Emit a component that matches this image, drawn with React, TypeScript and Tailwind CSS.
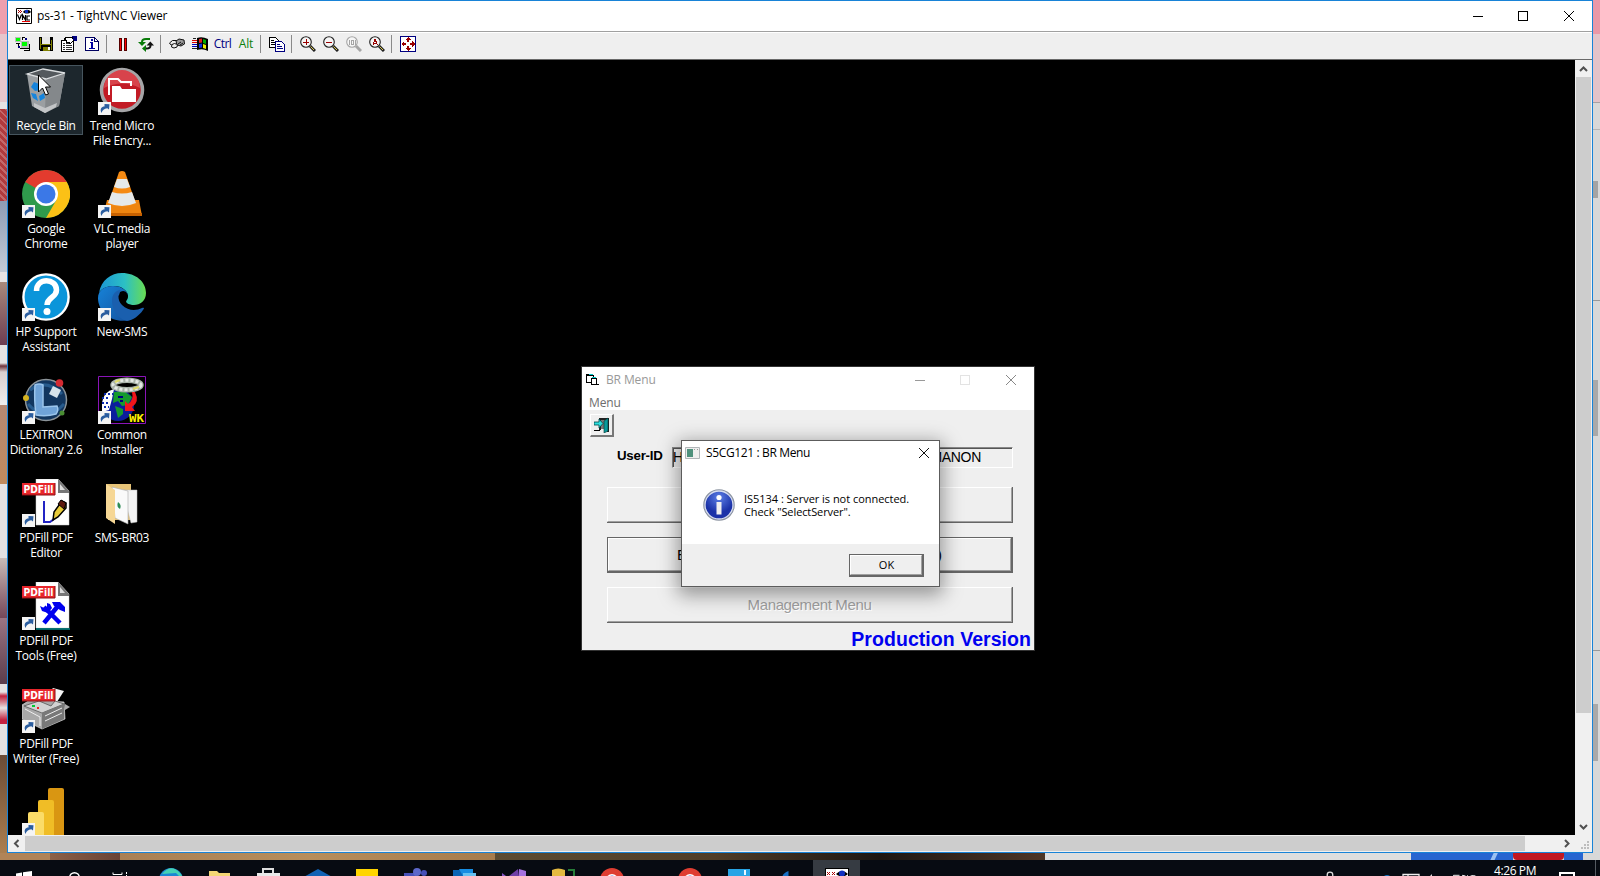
import React from "react";

type Kids = { children?: React.ReactNode };

const ui = "font-['Open_Sans','Noto_Sans',sans-serif]";

function Px({ children }: Kids) {
  return (
    <svg className="h-4 w-4" viewBox="0 0 16 16" shapeRendering="crispEdges" fill="none">
      {children}
    </svg>
  );
}

function VncLogo() {
  return (
    <svg className="h-4 w-4 shrink-0" viewBox="0 0 16 16" fill="none">
      <path d="M.5.5h15v15H.5z" fill="#fff" stroke="#000" />
      <path d="M2 2h1v1H2zm2 0h1v1H4zM3 3h1v1H3zM2 4h1v1H2zm2 0h1v1H4zM5 3h1v1H5z" fill="#a00" />
      <path d="M7 4c2-3 6-3 8 0-2 2-6 2-8 0z" fill="#000" />
      <path d="M9 2h3v3H9z" fill="#1030c0" />
      <path d="M1.5 6.500l2 5 2-5M6.500 12V7l3 5V7M14 8h-3v4h3" stroke="#000" strokeWidth="1.200" />
      <path d="M6 13h8v1H6z" fill="#e00" />
    </svg>
  );
}

function Magnifier({ mark, off }: { mark: React.ReactNode; off?: boolean }) {
  const c = off ? "#a5a5a5" : "#222";
  return (
    <svg className="h-4 w-4" viewBox="0 0 16 16" fill="none">
      <circle cx="6" cy="6" r="5.300" fill="#f6f6f6" stroke={c} strokeWidth="1.100" />
      <path d="M10 10l5 5" stroke={c} strokeWidth="3" />
      {!off && <path d="M10.500 10.500l3.500 3.500" stroke="#d8c850" strokeWidth="1" />}
      <g shapeRendering="crispEdges">{mark}</g>
    </svg>
  );
}

function Tool({ children }: Kids) {
  return <div className="flex h-[22px] w-[23px] items-center justify-center">{children}</div>;
}
function Sep() {
  return (
    <div className="w-2 pt-[2px] pl-[3px]">
      <div className="h-[18px] w-px bg-[#8a8a8a]" />
    </div>
  );
}

function Toolbar() {
  return (
    <div className="flex h-[26px] items-start bg-[#efefef] pl-[3px]">
      <Tool>
        <Px>
          <path d="M0 1h6v5H0z" fill="#bbb" /><path d="M1 2h4v3H1z" fill="#0f0" />
          <path d="M6 5h8v7H6z" fill="#bbb" /><path d="M7 6h5v4H7z" fill="#0f0" />
          <path d="M7.500 2v2M7 1.500h3M14.500 8v6M5 12.500h10M9 14.500h6M1 7.500h4M3.500 8v3" stroke="#000" />
          <path d="M10 2h2v2h-2zM3 10h2v2H3z" fill="#000080" />
        </Px>
      </Tool>
      <Tool>
        <Px>
          <path d="M1 1h14v14H2l-1-1z" fill="#000" /><path d="M2 2h1v11H2zM13 4h1v10h-1zM3 8h10v1H3z" fill="#808000" />
          <path d="M4 1h8v7H4z" fill="#e8e8e8" /><path d="M5 11h7v4H5z" fill="#808000" /><path d="M10 11h2v3h-2z" fill="#fff" />
        </Px>
      </Tool>
      <Tool>
        <Px>
          <path d="M.500 4.500h12v11H.500z" fill="#fff" stroke="#000" />
          <path d="M2 7.500h2M5 7.500h5M2 9.500h2M5 9.500h6M2 11.500h2M5 11.500h6M2 13.500h2M5 13.500h6" stroke="#333" />
          <path d="M3 3l3-2h5l2 3-4 4-1-2-2 1-1-3z" fill="#fff" stroke="#000" /><path d="M11 0h5v5h-3z" fill="#000080" />
        </Px>
      </Tool>
      <Tool>
        <Px>
          <path d="M1.500 1.500h9l4 4v9h-13z" fill="#fff" stroke="#000060" /><path d="M10.500 1v4.500H15" stroke="#000060" />
          <path d="M7 3h2v2H7zM6 6h3v6H7V7H6zM5 12h6v1H5z" fill="#0000a0" />
        </Px>
      </Tool>
      <Sep />
      <Tool>
        <Px><path d="M4.500 2.500h2v12h-2zM9.500 2.500h2v12h-2z" fill="#f00" stroke="#500" /></Px>
      </Tool>
      <Tool>
        <svg className="h-4 w-4" viewBox="0 0 16 16" fill="none">
          <path d="M4 7.500V6q0-3 4-3h4" stroke="#087a08" strokeWidth="2" /><path d="M0 6h8L4 10z" fill="#087a08" />
          <path d="M12.500 8v1.500q0 3-4 3H7" stroke="#111" strokeWidth="2" /><path d="M8.500 9.500h7.500l-3.700-4z" fill="#111" /><path d="M4 12.500l4-3.500v7z" fill="#087a08" />
        </svg>
      </Tool>
      <Sep />
      <Tool>
        <svg className="h-4 w-4" viewBox="0 0 16 16" fill="#eee" stroke="#111">
          <path d="M.500 7l3-2.500h4L9 6 7 9H2z" /><path d="M7 5l3-2 5 1 .5 4-3.500 2-4-1z" fill="#999" /><path d="M3 8.500l2.500-1 3 1L8 11l-3 1-2.500-1zM9 8l3-2M11 9l3-2" />
        </svg>
      </Tool>
      <Tool>
        <svg className="h-4 w-4" viewBox="0 0 16 16">
          <path d="M5 2q5-2 11 1v12q-5-3-11-1z" fill="#000" />
          <path d="M7 3l3-.5v4L7 7z" fill="#e02020" /><path d="M11 3l3 1v4l-3-1z" fill="#0a0" />
          <path d="M7 8l3-.5v4L7 12z" fill="#1030e0" /><path d="M11 8l3 1v4l-3-1z" fill="#ee0" />
          <path d="M0 4h5v1H0zm0 2h5v1H0z" fill="#d00" /><path d="M0 8h5v1H0zm0 2h5v1H0z" fill="#00b" /><path d="M0 12h5v1H0zM1 2h3v1H1z" fill="#222" />
        </svg>
      </Tool>
      <Tool><span className={`${ui} text-[12px] tracking-[-0.6px] text-[#000080]`}>Ctrl</span></Tool>
      <Tool><span className={`${ui} pl-px text-[12px] tracking-[-0.1px] text-[#0a800a]`}>Alt</span></Tool>
      <Sep />
      <Tool>
        <Px>
          <path d="M.500 1.500h6l3 3v7h-9z" fill="#fff" stroke="#000" /><path d="M2 4.500h3M2 6.500h5M2 8.500h5" stroke="#000" />
          <path d="M6.500 5.500h6l3 3v7h-9z" fill="#fff" stroke="#000080" /><path d="M8 8.500h3M8 10.500h5M8 12.500h6" stroke="#000080" />
        </Px>
      </Tool>
      <Sep />
      <Tool><Magnifier mark={<path d="M3 6.500h6M6.500 3v6" stroke="#900" />} /></Tool>
      <Tool><Magnifier mark={<path d="M3 6.500h6" stroke="#900" />} /></Tool>
      <Tool><Magnifier off mark={<path d="M3.500 4v5M5.500 4.500h2v4h-2zM9.500 4v5" stroke="#a5a5a5" />} /></Tool>
      <Tool><Magnifier mark={<path d="M4 9l2-6 2.500 6M4 7h4" stroke="#900" />} /></Tool>
      <Sep />
      <Tool>
        <Px>
          <path d="M.500.500h15v15H.500z" fill="#fff" stroke="#000080" />
          <path d="M8 1l3 3H5zM8 15l3-3H5zM1 8l3-3v6zM15 8l-3-3v6z" fill="#900" /><path d="M7 4h2v2H7zM7 10h2v2H7zM4 7h2v2H4zM10 7h2v2h-2z" fill="#900" />
        </Px>
      </Tool>
    </div>
  );
}

function Arrow() {
  return (
    <g>
      <path d="M0 35h13v13H0z" fill="#f4f4f4" />
      <path d="M3.500 46c-2-4 0-6.500 3-6.500V37l5 .3-.5 5.200-1.700-1.200C6 42 4.500 43 3.500 46z" fill="#2a5d9f" />
    </g>
  );
}

function Ico({ children, link = true }: Kids & { link?: boolean }) {
  return (
    <svg className="h-12 w-12" viewBox="0 0 48 48" fill="none">
      {children}
      {link && <Arrow />}
    </svg>
  );
}

function PdfBadge() {
  return (
    <g>
      <path d="M0 4h33v12H0z" fill="#e8262b" />
      <path d="M0 16h33V4" stroke="#8e1014" />
      <text x="1.500" y="14" fill="#fff" fontSize="10" fontWeight="700" fontFamily="DejaVu Sans" textLength="30" lengthAdjust="spacingAndGlyphs">PDFill</text>
    </g>
  );
}
function PdfPage() {
  return (
    <g>
      <path d="M14 0h22l11 12v34H14z" fill="#fff" stroke="#ccc" strokeWidth=".5" />
      <path d="M36 0l11 12v2H36z" fill="#777" />
      <path d="M38 5l5 6h-5z" fill="#ddd" />
    </g>
  );
}

const icons: Record<string, React.ReactNode> = {
  bin: (
    <Ico link={false}>
      <path d="M5 7l19 5 19-6-6 33-14 7-13-7z" fill="#9b9fa2" />
      <path d="M24 12l19-6-6 33-14 7z" fill="#84888b" />
      <path d="M5 7l16-5 22 4-19 6z" fill="#54595d" stroke="#dcdfe1" strokeWidth="1.300" />
      <path d="M9 20l3-5 5 2 2 6-6 1zM9 26l5 1 2 7-5-3zM17 29l5-3 1 5-5 3z" fill="#1684dc" />
      <path d="M12 36l11 5 12-5-1 4-11 6-11-6z" fill="#c3c5c7" />
      <path d="M16.500 8v17l4-4 3 7 3-1-3-7h5z" fill="#fff" stroke="#000" />
    </Ico>
  ),
  trend: (
    <Ico>
      <circle cx="24" cy="23" r="20.500" fill="#c21b25" stroke="#a5a5a7" strokeWidth="3.500" />
      <path d="M6 21a18 18 0 0136 0q-18-9-36 0z" fill="#d8434b" />
      <path d="M11 28V12h9l3 3h10v4" stroke="#fff" strokeWidth="2" />
      <path d="M14 19h8l2 3h14v13H14z" fill="#fff" />
    </Ico>
  ),
  chrome: (
    <Ico>
      <circle cx="24" cy="24" r="24" fill="#2f9a4c" />
      <path d="M24 24L3.200 12A24 24 0 0144.800 12z" fill="#e33b2e" />
      <path d="M24 12h20.800A24 24 0 0124 48l10.400-18z" fill="#fbc116" />
      <circle cx="24" cy="24" r="12" fill="#fff" />
      <circle cx="24" cy="24" r="9.500" fill="#3b78e7" />
    </Ico>
  ),
  vlc: (
    <Ico>
      <path d="M9 30h32l3 16H5z" fill="#ee8510" /><path d="M5 43h39v3H5z" fill="#c76100" />
      <path d="M21 2q3-2 6 0l11 32q-14 6-28 0z" fill="#f58a13" />
      <path d="M19 9h10l3 8q-8 3-16 0zM14 22q10 3 20 0l4 11q-14 6-28 0z" fill="#e5e9ea" />
    </Ico>
  ),
  hp: (
    <Ico>
      <circle cx="24" cy="24" r="22.600" fill="#0b95da" stroke="#fff" strokeWidth="2.400" />
      <path d="M14.500 18c0-14 20-13 20-1 0 8-9.500 7-9.500 15" stroke="#fff" strokeWidth="5.500" />
      <circle cx="25" cy="38.500" r="3.500" fill="#fff" />
    </Ico>
  ),
  edge: (
    <Ico>
      <defs>
        <linearGradient id="eg" x1="0" x2="1"><stop stopColor="#1b96d6" /><stop offset=".55" stopColor="#2cc0c4" /><stop offset="1" stopColor="#69dc52" /></linearGradient>
        <linearGradient id="eb" x1="0" x2="1" y2="1"><stop stopColor="#1683d8" /><stop offset="1" stopColor="#15529e" /></linearGradient>
      </defs>
      <path d="M1 20C3 7 13 0 24 0c14 0 24 9 24 20 0 8-6 12-12 12-5 0-8-1-8-3s2-2 2-6c0-5-6-10-14-10S3 16 1 20z" fill="url(#eg)" />
      <path d="M0 25C0 17 7 13 15 13c9 0 14 5 15 9-6-5-13 1-12 8 1 9 9 18 14 17-18 4-32-8-32-22z" fill="url(#eb)" />
      <path d="M14 28c0-7 4-11 9-11-3 3-4 10 1 15 6 6 14 6 20 3 3-1 2 1 1 2-4 6-10 10-16 11-9-2-15-11-15-20z" fill="#1a5fae" />
      <path d="M22 19q5-3 7.500 2 .5 4-1.500 7 0 3 6 4-8 1-11-4-3-5-1-9z" fill="#000" />
    </Ico>
  ),
  lex: (
    <Ico>
      <circle cx="24" cy="24" r="20.500" fill="#12365f" stroke="#8c9499" strokeWidth="1.500" />
      <path d="M8 14q16-12 32 4M6 28q18 20 36 0" stroke="#275b8d" strokeWidth="3" />
      <path d="M13 9q4-2 8 0l0 22 14-1q2 4-1 8-10 3-20 1-2-16-1-30z" fill="#6fa3d8" stroke="#9bc5ec" strokeWidth="1.500" />
      <path d="M31 10l8 4-4 8-8-4z" fill="#d7e3ea" /><circle cx="37.500" cy="7" r="3.800" fill="#d52a32" />
      <circle cx="4" cy="22" r="3" fill="#d5b321" /><circle cx="40" cy="37" r="2.500" fill="#4a8e33" />
    </Ico>
  ),
  common: (
    <Ico>
      <path d="M.500.500h47v47H.500z" fill="#000" stroke="#8a14b8" />
      <circle cx="20" cy="29" r="16" fill="#0b1e9c" />
      <path d="M4 27q2-12 12-14l-2 10-3 11-7 2z" fill="#fff" />
      <path d="M4 22h8m-8 5h8m-6-9h9m-9 13h5" stroke="#0b2bb0" strokeWidth="2" strokeDasharray="2 2" />
      <path d="M16 16l10-1 8 6-4 8-6 1-4-5-5 2zM17 30l8 3 0 5-5 4z" fill="#159a2d" />
      <path d="M20 20h5v2h-5zM22 24h3v2h-3z" fill="#000080" />
      <ellipse cx="29" cy="9" rx="14" ry="4.800" stroke="#a9b3a9" strokeWidth="5.500" />
      <ellipse cx="29" cy="9" rx="14" ry="4.800" stroke="#e4e8e4" strokeWidth="3" strokeDasharray="3 2" /><path d="M17 6l5-2m13 9l6-2" stroke="#dedb6a" strokeWidth="2" />
      <path d="M37 16q5 10-3 15l3 4H27V25l3 3q6-4 4-12z" fill="#f0151b" />
      <text x="31" y="46" fill="#ffef00" fontSize="10" fontWeight="700" fontFamily="DejaVu Sans Mono" textLength="15" lengthAdjust="spacingAndGlyphs">WK</text>
    </Ico>
  ),
  editor: (
    <Ico>
      <PdfPage />
      <path d="M22 22v21h6l4-3" stroke="#2324c4" strokeWidth="2" />
      <path d="M31 41l1-8 8-11 4 2v5l-8 9z" fill="#e8cb3a" stroke="#000" strokeWidth="1.500" /><path d="M36 25l3-4 5 3-2 6z" fill="#5d1a10" stroke="#000" />
      <PdfBadge />
    </Ico>
  ),
  tools: (
    <Ico>
      <PdfPage />
      <path d="M14 47h34" stroke="#088" strokeWidth="1.500" />
      <path d="M22 41l14-17M22 25l16 16" stroke="#0000ee" strokeWidth="4.500" />
      <path d="M30 20h8l5 5v5l-5-2-6-4zM18 24l2 5 6 2 4-5-2-4-3-1v4l-3 1z" fill="#0000ee" />
      <PdfBadge />
    </Ico>
  ),
  writer: (
    <Ico>
      <path d="M31 3l11 3-9 14-14-3z" fill="#f5f5f5" /><path d="M26 16l8 3" stroke="#1e2c8a" strokeWidth="2" />
      <path d="M0 20l8-5 34 2 1 17-23 10-20-10z" fill="#a9a9a9" stroke="#ddd" strokeWidth=".7" />
      <path d="M2 21l18 7 22-9-9-3-4 5-12-5z" fill="#d2d2d2" stroke="#555" strokeWidth=".8" />
      <path d="M20 28v16l22-10V19z" fill="#787878" /><path d="M3 24l15 8v9M23 31l17-8M23 36l17-8" stroke="#eee" />
      <path d="M43 19l5 3-5 3z" fill="#aaa" /><path d="M10 21h3" stroke="#0c3" strokeWidth="2" /><path d="M15 23h2" stroke="#e22" strokeWidth="2" />
      <PdfBadge />
    </Ico>
  ),
  powerbi: (
    <Ico>
      <path d="M26 2q0-2 2-2h12q2 0 2 2v46H26z" fill="#d99612" />
      <path d="M16 14q0-2 2-2h12q2 0 2 2v34H16z" fill="#f0bd26" />
      <path d="M6 26q0-2 2-2h12q2 0 2 2v22H6z" fill="#fbdc68" />
    </Ico>
  ),
  folder: (
    <Ico link={false}>
      <path d="M8 5h25v36H10z" fill="#e7c478" /><path d="M24 11h15v32l-6 1z" fill="#f4f4f4" stroke="#bbb" strokeWidth=".5" />
      <path d="M14 8l16 4v33l-13-6z" fill="#fafafa" stroke="#aaa" strokeWidth=".6" /><path d="M8 5l9 6v34l-9-6z" fill="#f6d795" />
      <path d="M20 23q4 3 2 7-4-2-2-7z" fill="#2e8c55" />
    </Ico>
  ),
};

const columns: [string, string[]][][] = [
  [
    ["bin", ["Recycle Bin"]], ["chrome", ["Google", "Chrome"]], ["hp", ["HP Support", "Assistant"]],
    ["lex", ["LEXiTRON", "Dictionary 2.6"]], ["editor", ["PDFill PDF", "Editor"]], ["tools", ["PDFill PDF", "Tools (Free)"]],
    ["writer", ["PDFill PDF", "Writer (Free)"]], ["powerbi", []],
  ],
  [
    ["trend", ["Trend Micro", "File Encry..."]], ["vlc", ["VLC media", "player"]], ["edge", ["New-SMS"]],
    ["common", ["Common", "Installer"]], ["folder", ["SMS-BR03"]],
  ],
];

function DesktopIcons() {
  return (
    <div className="flex gap-[2px] pl-[1px] pt-[5px]">
      {columns.map((col, i) => (
        <div key={i} className="flex w-[74px] flex-col">
          {col.map(([id, lines]) => (
            <div key={id} className="h-[103px]">
              <div className={id === "bin" ? "flex h-[70px] flex-col items-center bg-[#1d272d] pt-[1px] outline -outline-offset-1 outline-[#46555e]" : "flex flex-col items-center pt-[2px]"}>
                <div className={id === "bin" ? "pt-[1px]" : ""}>{icons[id]}</div>
                <div className={`${ui} pt-[3px] text-center text-[12px] leading-[15px] tracking-[-0.3px] whitespace-nowrap text-white`}>
                  {lines.map((l) => <div key={l}>{l}</div>)}
                </div>
              </div>
            </div>
          ))}
        </div>
      ))}
    </div>
  );
}

function Caption({ kind, color }: { kind: "min" | "max" | "close"; color: string }) {
  const d = { min: "M0 5.500h10", max: "M.500.500h9v9h-9z", close: "M0 0l10 10M10 0L0 10" }[kind];
  return (
    <svg className={kind === "close" ? "ml-px h-[10px] w-[10px]" : "h-[10px] w-[10px]"} viewBox="0 0 10 10" fill="none" stroke={color} shapeRendering={kind === "close" ? "auto" : "crispEdges"} overflow="visible">
      <path d={d} />
    </svg>
  );
}

function MenuButton({ children, strong, off }: Kids & { strong?: boolean; off?: boolean }) {
  return (
    <div className={strong ? "h-9 border border-r-2 border-b-2 border-[#666]" : "h-9 border-r border-b border-[#666]"}>
      <div className={`flex h-full items-center justify-center border border-t-white border-l-white border-r-[#a0a0a0] border-b-[#a0a0a0] pt-[2px] font-['Liberation_Sans',sans-serif] text-[15px] ${off ? "tracking-[-0.35px] text-[#a0a0a0] [text-shadow:1px_1px_0_#fff]" : "text-black"}`}>
        {children}
      </div>
    </div>
  );
}

function BrMenu() {
  return (
    <div className="absolute top-[306px] left-[573px] flex h-[285px] w-[454px] flex-col border border-[#333] bg-[#efefef] *:shrink-0">
      <div className="flex h-[25px] items-center bg-white pl-1">
        <svg className="h-[13px] w-[14px]" viewBox="0 0 14 13" fill="#fff" stroke="#000" shapeRendering="crispEdges">
          <path d="M.500 2.500h7v7h-7z" /><path d="M0 1.500h4" /><path d="M5.500 5.500h5v6h-5z" /><path d="M3 1.500h4M6 4.500h4" stroke="#0cc" /><path d="M11 11.500h2" />
        </svg>
        <div className={`${ui} flex-1 pl-[6px] text-[12px] tracking-[-0.13px] text-[#999]`}>BR Menu</div>
        <div className="flex gap-[35px] pr-[18px]">
          <Caption kind="min" color="#999" />
          <Caption kind="max" color="#e3e3e3" />
          <Caption kind="close" color="#888" />
        </div>
      </div>
      <div className={`${ui} flex h-[18px] items-center bg-white pt-[2px] pl-[7px] text-[12px] leading-[15px] tracking-[-0.1px] text-[#6d6d6d]`}>Menu</div>
      <div className="px-2 pt-1">
        <div className="flex h-[23px] w-6 items-center justify-center border-t border-r-2 border-b-2 border-l border-t-white border-r-[#777] border-b-[#777] border-l-white">
          <svg className="h-4 w-4" viewBox="0 0 16 16">
            <path d="M5 1h10v14h-2V3H7v10H5z" fill="#222" /><path d="M7 3h6v9H7z" fill="#777" /><path d="M10 4l4-3v13l-4 2z" fill="#0a9a9a" stroke="#033" strokeWidth=".6" />
            <path d="M0 5h5V2l4 4.500L5 11V8H0z" fill="#2ee0e0" stroke="#044" strokeWidth=".8" /><path d="M0 13h6v1H0z" fill="#000" />
          </svg>
        </div>
      </div>
      <div className="mt-[10px] flex pr-[21px] pl-[35px] font-['Liberation_Sans',sans-serif]">
        <div className="w-[55px] text-[13.300px] leading-[18px] font-bold tracking-[-0.25px] text-black">User-ID</div>
        <div className="flex h-[21px] flex-1 items-center justify-between border border-t-[#888] border-r-white border-b-white border-l-[#888] pr-[31px] text-[14px] text-black shadow-[inset_1px_1px_0_#555]">
          <span>H</span><span className="tracking-[-0.3px]">MANON</span>
        </div>
      </div>
      <div className="flex flex-col gap-[14px] pt-[19px] pr-[21px] pl-[25px]">
        <MenuButton />
        <MenuButton strong>
          <span className="flex w-[265px] justify-between"><span>E</span><span>)</span></span>
        </MenuButton>
        <MenuButton off>Management Menu</MenuButton>
      </div>
      <div className="pt-[5px] pr-[3px] text-right font-['Liberation_Sans',sans-serif] text-[19.500px] leading-[22px] font-bold tracking-[0.05px] text-[#0000f0]">Production Version</div>
    </div>
  );
}

function MessageBox() {
  return (
    <div className="absolute top-[380px] left-[673px] flex h-[147px] w-[259px] flex-col border border-[#5c5c5c] bg-[#efefef] shadow-[0_5px_18px_3px_rgba(0,0,0,0.38)]">
      <div className="flex h-[24px] items-center bg-white pl-[3px]">
        <svg className="h-[14px] w-[15px]" viewBox="0 0 15 14">
          <path d="M.500 1.500h14v11H.500z" fill="#eee" stroke="#b0b5b8" /><path d="M2 3h6v8H2z" fill="#4e917c" /><path d="M9 3h1v1H9zm3 0h1v1h-1z" fill="#999" />
        </svg>
        <div className={`${ui} flex-1 pl-[6px] text-[12px] tracking-[-0.36px] text-black`}>S5CG121 : BR Menu</div>
        <div className="pr-[10px]"><Caption kind="close" color="#111" /></div>
      </div>
      <div className="flex h-[79px] bg-white pt-[22px] pl-[21px]">
        <svg className="mt-[1px] h-[33px] w-[33px] shrink-0" viewBox="0 0 33 33">
          <defs><radialGradient id="ig" cy=".25"><stop stopColor="#5d80e6" /><stop offset="1" stopColor="#1b32a8" /></radialGradient></defs>
          <circle cx="16" cy="17" r="15" fill="url(#ig)" stroke="#8b93a0" strokeWidth="1.500" /><circle cx="16" cy="17" r="14" fill="none" stroke="#d9dff0" strokeWidth="1.300" />
          <circle cx="16" cy="9.500" r="2.600" fill="#fff" /><path d="M13.500 14h5v12.500h-5z" fill="#f0f0f0" />
        </svg>
        <div className={`${ui} pt-[5px] pl-[8px] text-[11px] leading-[13px] tracking-[-0.03px] whitespace-nowrap text-black`}>
          <div>IS5134 : Server is not connected.</div>
          <div className="tracking-[-0.1px]">Check "SelectServer".</div>
        </div>
      </div>
      <div className="flex justify-end pt-[10px] pr-[15px]">
        <div className="h-[23px] w-[75px] border border-r-2 border-b-2 border-[#666]">
          <div className={`${ui} flex h-full items-center justify-center border border-t-white border-r-[#a0a0a0] border-b-[#a0a0a0] border-l-white pl-px text-[11px] text-black`}>OK</div>
        </div>
      </div>
    </div>
  );
}

function Chevron({ d }: { d: string }) {
  return (
    <svg className="h-[17px] w-[17px] shrink-0" viewBox="0 0 17 17" fill="none" stroke="#505050" strokeWidth="2"><path d={d} /></svg>
  );
}

function Viewer() {
  return (
    <div className="flex h-[853px] w-[1586px] flex-col border border-[#1883d7] bg-white">
      <div className="flex h-[30px] items-center pl-2">
        <VncLogo />
        <div className={`${ui} flex-1 pl-[5px] text-[12px] tracking-[-0.13px] text-black`}>ps-31 - TightVNC Viewer</div>
        <div className="flex gap-[35px] pr-[18px]">
          <Caption kind="min" color="#000" /><Caption kind="max" color="#000" /><Caption kind="close" color="#000" />
        </div>
      </div>
      <div className="h-[2px] border-t border-[#a0a0a0] bg-white" />
      <Toolbar />
      <div className="h-px bg-[#696969]" />
      <div className="flex h-[775px]">
        <div className="relative flex-1 overflow-hidden bg-black">
          <DesktopIcons />
          <BrMenu />
          <MessageBox />
        </div>
        <div className="flex w-[17px] flex-col items-center justify-between bg-[#f0f0f0]">
          <div className="flex flex-col items-center">
            <Chevron d="M5 11l3.500-3.500L12 11" />
            <div className="h-[636px] w-[15px] bg-[#cdcdcd]" />
          </div>
          <Chevron d="M5 7l3.500 3.500L12 7" />
        </div>
      </div>
      <div className="flex h-[17px] items-center bg-[#f0f0f0]">
        <Chevron d="M10.500 5L7 8.500l3.500 3.500" />
        <div className="h-[15px] w-[1500px] bg-[#cdcdcd]" />
        <div className="flex-1" />
        <Chevron d="M7 5l3.500 3.500L7 12" />
        <svg className="h-[17px] w-[17px] shrink-0" viewBox="0 0 17 17" fill="#bdbdbd"><path d="M12 6h2v2h-2zM9 9h2v2H9zM12 9h2v2h-2zM6 12h2v2H6zM9 12h2v2H9zM12 12h2v2h-2z" /></svg>
      </div>
    </div>
  );
}

function LeftEdge() {
  return (
    <div className="flex w-[7px] flex-col">
      <div className="h-[34px] bg-[#ee9fae]" />
      <div className="h-[68px] bg-[#e6c6cc]" />
      <div className="h-[7px] bg-[#e6e2e4]" />
      <div className="h-[92px] bg-[repeating-linear-gradient(45deg,#b03a3e_0,#b03a3e_3px,#c4686a_3px,#c4686a_5px)]" />
      <div className="h-[71px] bg-linear-to-b from-[#8d9cb4] to-[#c3cbd6]" />
      <div className="h-[10px] bg-[#e8e4e4]" />
      <div className="h-[63px] bg-linear-to-b from-[#a98a7c] to-[#6d3d52]" />
      <div className="h-[60px] bg-[linear-gradient(#e5e3e3_30%,#70333c_35%,#d8d0d0_45%,#eee)]" />
      <div className="h-[79px] bg-linear-to-b from-[#b68973] to-[#bf8a5d]" />
      <div className="h-[74px] bg-[#e3e1e2]" />
      <div className="h-[60px] bg-linear-to-b from-[#c8bcb8] to-[#75485a]" />
      <div className="h-[66px] bg-linear-to-b from-[#9b7584] to-[#5b3d4c]" />
      <div className="h-[40px] bg-[linear-gradient(#e6e2e2_20%,#c42240_30%,#e6e2e2_60%,#c42240_90%)]" />
      <div className="h-[31px] bg-[#e3e2e2]" />
      <div className="flex-1 bg-linear-to-b from-[#6b4c36] to-[#ab7f50]" />
    </div>
  );
}

function RightEdge() {
  return (
    <div className="flex w-[7px] flex-col bg-[#d8d8d8]">
      <div className="h-[34px] bg-[#ea98a8]" />
      <div className="h-[68px] bg-[#e3c3c9]" />
      <div className="h-[27px] border-t border-[#a8a0a2]" />
      <div className="h-[52px] border-t border-[#b5b5b5]" />
      <div className="h-[17px] w-[5px] bg-[#a4a4a4]" />
      <div className="h-[102px]" />
      <div className="h-[80px] border-t border-[#999]" />
      <div className="h-[56px] w-[5px] bg-[#a9a9a9]" />
      <div className="h-[214px]" />
      <div className="h-[54px] border-t border-[#999]" />
      <div className="h-[57px] w-[5px] bg-[#a9a9a9]" />
    </div>
  );
}

function T({ children }: Kids) {
  return <svg className="h-4 w-[49px] shrink-0" viewBox="0 0 49 16" fill="none">{children}</svg>;
}

function TaskChrome() {
  return (
    <T>
      <circle cx="24" cy="20" r="12" fill="#df3e32" /><circle cx="24" cy="20" r="6" fill="#fff" /><circle cx="24" cy="20" r="4.500" fill="#3b78e7" />
    </T>
  );
}

function Taskbar() {
  return (
    <div className="flex h-4 w-[1600px] overflow-hidden bg-[#070b12]">
      <T><path d="M16 13.500l6-1V16h-6zM23 12.300l9-1.300v5h-9z" fill="#fff" /></T>
      <T><circle cx="25.500" cy="17.500" r="4.800" stroke="#fff" strokeWidth="1.500" /></T>
      <T><path d="M15 12.500v2h9v-2M28.500 12v2M28.500 15v1" stroke="#fff" /></T>
      <T><circle cx="24" cy="20" r="12" fill="#1b87d2" /><path d="M15 14q9-11 18-1 4 5 2 6l-6-6z" fill="#45d2b5" /></T>
      <T><path d="M13 11h8l2 2h11v3H13z" fill="#f4d675" /></T>
      <T><path d="M18 16V9h10v7" stroke="#ddd" strokeWidth="2" /><path d="M12 13h23v3H12z" fill="#e8e8e8" /></T>
      <T><path d="M24 9l12.500 7h-25z" fill="#1162b4" /></T>
      <T><path d="M13 9h22v7H13z" fill="#ffd500" /></T>
      <T><path d="M12 13h12v3H12z" fill="#4650b8" /><circle cx="25" cy="12" r="4" fill="#5d68ca" /><circle cx="32" cy="13" r="3" fill="#4650b8" /></T>
      <T><path d="M12 10h10v6H12z" fill="#0a64b4" /><path d="M18 9h14v7H22z" fill="#168de2" /><path d="M22 13h13v3H22z" fill="#66c1f1" /></T>
      <T><path d="M29 9l7 2v5h-7z" fill="#a671df" /><path d="M28 9l-9 7h10z" fill="#7040a8" /><path d="M12 13l4 3h-4z" fill="#8554c5" /></T>
      <T><path d="M13 10q6-3 13 0v6H13z" fill="#e4ba40" /><path d="M29 10h6v6" stroke="#267d38" strokeWidth="2" /></T>
      <TaskChrome />
      <div className="w-[29px] shrink-0" />
      <TaskChrome />
      <T><path d="M13 9h22v7H13z" fill="#27a4e5" /><path d="M29 10h2v5h-2z" fill="#e9f7ff" /></T>
      <T><path d="M24.500 11v5h-6q1-3 6-5z" fill="#176fc4" /></T>
      <div className="flex w-[47px] shrink-0 justify-center overflow-hidden bg-[#363b42] pt-2">
        <svg className="h-6 w-6 shrink-0" viewBox="0 0 24 24">
          <path d="M0 0h24v24H0z" fill="#fff" stroke="#000" strokeWidth="2" />
          <path d="M2 4l3 3M5 4L2 7M7 4l3 3M10 4L7 7" stroke="#a00" /><path d="M11 6q6-6 12 0-6 5-12 0z" fill="#000" /><circle cx="17" cy="5.500" r="3" fill="#1230c0" />
        </svg>
      </div>
      <div className="flex-1" />
      <svg className="h-4 w-[166px] shrink-0" viewBox="1320 0 166 16" fill="none">
        <circle cx="1330" cy="15" r="2.800" stroke="#ddd" strokeWidth="1.300" />
        <path d="M1384 16q3-2 6 0z" fill="#1478c8" />
        <path d="M1403 16v-1.500h16V16M1408 14v2" stroke="#eee" strokeWidth="1.300" />
        <path d="M1430 16l2-2v2z" fill="#ddd" />
        <path d="M1453.500 16v-.7h6m3 .7v-.7l3 .7m2 0v-.7m3 .7q3-1 5 0" stroke="#eee" />
      </svg>
      <div className={`${ui} w-[59px] shrink-0 pt-[5px] pl-2 text-[12px] leading-[11px] tracking-[-0.4px] whitespace-nowrap text-white`}>4:26 PM</div>
      <svg className="h-4 w-[55px] shrink-0" viewBox="1545 0 55 16" fill="none">
        <path d="M1560 16v-3h14v3" stroke="#fff" strokeWidth="2" /><path d="M1595.500 0v16" stroke="#555b62" />
      </svg>
    </div>
  );
}

export default function App() {
  return (
    <div className="flex h-[876px] w-[1600px] flex-col overflow-hidden bg-[#d8d8d8]">
      <div className="flex h-[853px]">
        <LeftEdge />
        <Viewer />
        <RightEdge />
      </div>
      <div className="flex h-[7px]">
        <div className="w-[50px] bg-[#b08458]" />
        <div className="w-[70px] bg-linear-to-r from-[#8c6148] to-[#694236]" />
        <div className="w-[375px] bg-linear-to-r from-[#a98054] via-[#b78e5c] to-[#a67c4c]" />
        <div className="w-[550px] bg-[linear-gradient(90deg,#5c4c32,#4f3d28_40%,#1d1713_70%,#4d3626)]" />
        <div className="w-[366px] bg-[#dedede]" />
        <div className="w-[102px] bg-[linear-gradient(115deg,#2765d0_78%,#9bc2f2_79%,#9bc2f2_82%,#2765d0_83%)]" />
        <div className="w-[51px] rounded-b bg-[#c01822]" />
        <div className="w-[19px] bg-[#2765d0]" />
        <div className="flex-1 bg-[#d8d8d8]" />
      </div>
      <Taskbar />
    </div>
  );
}
